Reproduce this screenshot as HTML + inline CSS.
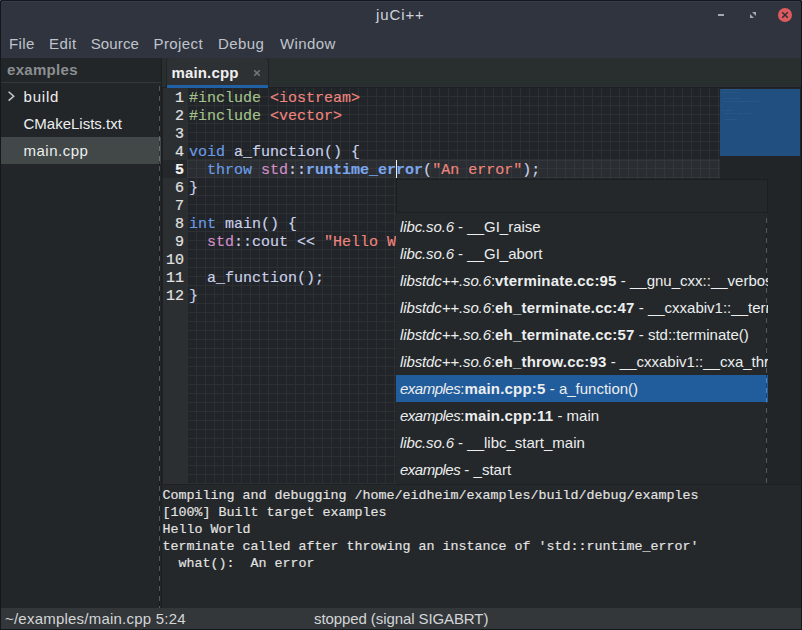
<!DOCTYPE html>
<html><head><meta charset="utf-8">
<style>
*{margin:0;padding:0;box-sizing:border-box}
html,body{width:802px;height:630px;overflow:hidden;background:#14171b}
body{position:relative;font-family:"Liberation Sans",sans-serif}
.a{position:absolute}
.ui{font-family:"Liberation Sans",sans-serif;white-space:pre}
.mono{font-family:"Liberation Mono",monospace;white-space:pre}
#menu span{position:absolute;top:35px;font-size:15px;color:#c0c4cb;line-height:17px;white-space:pre;letter-spacing:0.4px}
.ln{position:absolute;left:164px;width:20px;text-align:right;font-size:15px;line-height:18px;color:#e2e2e2;-webkit-text-stroke:0.2px currentColor}
.cl{position:absolute;left:189px;font-size:15px;line-height:18px;color:#cbd1ea;-webkit-text-stroke:0.15px currentColor}
.kw{color:#6b9de6}.pp{color:#a3c28b}.st{color:#f0857e}.ns{color:#d38fc9}.fn{color:#7aa6ee;font-weight:bold}
.term{position:absolute;left:162.5px;font-size:13.33px;line-height:17px;color:#e4e4e4;-webkit-text-stroke:0.15px currentColor}
.pr{position:absolute;left:0;width:372px;height:27px;font-size:15px;line-height:27px;color:#eceeef;padding-left:4px;white-space:pre;overflow:hidden}
.pr{letter-spacing:0px}.pr i{font-style:italic;letter-spacing:-0.12px}.pr i.e{letter-spacing:-0.5px}.pr b{font-weight:bold;letter-spacing:0.2px}
.dash2{background-image:linear-gradient(to bottom,rgba(255,255,255,0.22) 5px,rgba(0,0,0,0.25) 5px);background-size:1px 10px}
.dash{background-image:linear-gradient(to bottom,rgba(255,255,255,0.23) 5px,rgba(0,0,0,0.28) 5px);background-size:1px 10px}
</style></head><body>
<div class="a" style="left:1px;top:1px;width:800px;height:628px;background:#2f343f;border-radius:2px 2px 0 0"></div>
<div class="a" style="left:0;top:0;width:1px;height:1px;background:#4a5564"></div><div class="a" style="left:801px;top:0;width:1px;height:1px;background:#4a5564"></div>
<div class="a" style="left:2px;top:1px;width:798px;height:1px;background:#373c4a"></div>
<div class="a ui" style="left:376px;top:6px;font-size:15px;color:#cfd3da;line-height:18px;letter-spacing:0.9px">juCi++</div>
<div class="a" style="left:718px;top:14px;width:6px;height:2px;background:#a4a8b1"></div>
<svg class="a" style="left:744px;top:6px" width="20" height="20"><polygon points="8,6 12,6 12,10" fill="#a4a8b1"/><polygon points="6,8 6,12 10,12" fill="#a4a8b1"/></svg>
<svg class="a" style="left:774px;top:4px" width="22" height="22"><circle cx="11" cy="11" r="7" fill="#dd5a5f"/><path d="M8.2 8.2 L13.8 13.8 M13.8 8.2 L8.2 13.8" stroke="#2c303a" stroke-width="1.5" fill="none"/></svg>
<div id="menu"><span style="left:9px">File</span><span style="left:49px">Edit</span><span style="left:90.7px;letter-spacing:0.15px">Source</span><span style="left:153.5px">Project</span><span style="left:218px">Debug</span><span style="left:280px">Window</span></div>
<div class="a" style="left:1px;top:58px;width:160px;height:550px;background:#232629"></div>
<div class="a ui" style="left:7px;top:61px;font-size:15px;line-height:18px;font-weight:bold;color:#8c8f91;letter-spacing:0.3px">examples</div>
<div class="a" style="left:1px;top:82px;width:160px;height:1px;background:#34383b"></div>
<div class="a" style="left:1px;top:137px;width:160px;height:27px;background:#424847"></div>
<svg class="a" style="left:6px;top:90px" width="12" height="14"><path d="M2.6 1.8 L7.7 6.2 L2.6 10.6" fill="none" stroke="#c8cacb" stroke-width="1.5"/></svg>
<div class="a ui" style="left:23.5px;top:88px;font-size:15px;line-height:18px;color:#eceeef;letter-spacing:0.8px">build</div>
<div class="a ui" style="left:23.5px;top:115px;font-size:15px;line-height:18px;color:#eceeef">CMakeLists.txt</div>
<div class="a ui" style="left:23.5px;top:142px;font-size:15px;line-height:18px;color:#eceeef;letter-spacing:0.5px">main.cpp</div>
<div class="a dash" style="left:159px;top:86px;width:1px;height:522px"></div>
<div class="a" style="left:161px;top:58px;width:1px;height:550px;background:#1c1e20"></div>
<div class="a" style="left:162px;top:58px;width:639px;height:30px;background:#292e2e"></div>
<div class="a" style="left:162px;top:86px;width:639px;height:1px;background:#2d2e3b"></div>
<div class="a" style="left:162px;top:87px;width:639px;height:1px;background:#1e2022"></div>
<div class="a" style="left:166px;top:58px;width:103px;height:30px;background:#2d3134;border-radius:4px 4px 0 0;border-right:1px solid #1f2224;border-left:1px solid #222528"></div>
<div class="a ui" style="left:171.5px;top:64px;font-size:15px;line-height:18px;font-weight:bold;color:#f0f0f0;letter-spacing:0.15px">main.cpp</div>
<svg class="a" style="left:246px;top:62px" width="22" height="22"><path d="M8.2 8.2 L13.8 13.8 M13.8 8.2 L8.2 13.8" stroke="#727678" stroke-width="1.6" fill="none"/></svg>
<div class="a" style="left:167px;top:85px;width:101px;height:3px;background:#2160a5"></div>
<div class="a" style="left:166px;top:84px;width:1px;height:4px;background:#1e2022"></div>
<div class="a" style="left:162px;top:88px;width:1px;height:397px;background:#1e2022"></div>
<div class="a" style="left:163px;top:88px;width:25px;height:396px;background:#2b2f31"></div>
<div class="a" style="left:188px;top:88px;width:532px;height:396px;background-color:#212428;background-image:linear-gradient(to right,transparent 8px,#2c3033 8px),linear-gradient(to bottom,transparent 8px,#2c3033 8px);background-size:9px 9px,9px 9px"></div>
<div class="a" style="left:163px;top:160px;width:24px;height:18px;background:#25282b"></div>
<div class="a" style="left:187px;top:160px;width:533px;height:18px;background:rgba(255,255,255,0.045);border-top:1px solid #33373a;border-left:1px solid #35393c"></div>
<div class="ln mono" style="top:90px">1</div>
<div class="cl mono" style="top:90px"><span class="pp">#include</span> <span class="st">&lt;iostream&gt;</span></div>
<div class="ln mono" style="top:108px">2</div>
<div class="cl mono" style="top:108px"><span class="pp">#include</span> <span class="st">&lt;vector&gt;</span></div>
<div class="ln mono" style="top:126px">3</div>
<div class="cl mono" style="top:126px"></div>
<div class="ln mono" style="top:144px">4</div>
<div class="cl mono" style="top:144px"><span class="kw">void</span> a_function() {</div>
<div class="ln mono" style="top:162px;font-weight:bold;color:#f4f4f4">5</div>
<div class="cl mono" style="top:162px">  <span class="kw">throw</span> <span class="ns">std</span>::<span class="fn">runtime_error</span>(<span class="st">"An error"</span>);</div>
<div class="ln mono" style="top:180px">6</div>
<div class="cl mono" style="top:180px">}</div>
<div class="ln mono" style="top:198px">7</div>
<div class="cl mono" style="top:198px"></div>
<div class="ln mono" style="top:216px">8</div>
<div class="cl mono" style="top:216px"><span class="kw">int</span> main() {</div>
<div class="ln mono" style="top:234px">9</div>
<div class="cl mono" style="top:234px">  <span class="ns">std</span>::cout &lt;&lt; <span class="st">"Hello World"</span>;</div>
<div class="ln mono" style="top:252px">10</div>
<div class="cl mono" style="top:252px"></div>
<div class="ln mono" style="top:270px">11</div>
<div class="cl mono" style="top:270px">  a_function();</div>
<div class="ln mono" style="top:288px">12</div>
<div class="cl mono" style="top:288px">}</div>
<div class="a" style="left:396px;top:160px;width:1px;height:18px;background:#f0f0f0"></div>
<div class="a" style="left:720px;top:88px;width:81px;height:397px;background:#222528"></div>
<div class="a" style="left:720px;top:89px;width:80px;height:67px;background:#214f80"></div>
<div class="a" style="left:722px;top:89px;width:8px;height:1px;background:#2a5685"></div>
<div class="a" style="left:731px;top:89px;width:10px;height:1px;background:#2a5685"></div>
<div class="a" style="left:722px;top:92px;width:8px;height:1px;background:#2a5685"></div>
<div class="a" style="left:731px;top:92px;width:8px;height:1px;background:#2a5685"></div>
<div class="a" style="left:722px;top:98px;width:4px;height:1px;background:#2a5685"></div>
<div class="a" style="left:727px;top:98px;width:12px;height:1px;background:#2a5685"></div>
<div class="a" style="left:740px;top:98px;width:1px;height:1px;background:#2a5685"></div>
<div class="a" style="left:724px;top:101px;width:5px;height:1px;background:#2a5685"></div>
<div class="a" style="left:730px;top:101px;width:22px;height:1px;background:#2a5685"></div>
<div class="a" style="left:753px;top:101px;width:8px;height:1px;background:#2a5685"></div>
<div class="a" style="left:722px;top:104px;width:1px;height:1px;background:#2a5685"></div>
<div class="a" style="left:722px;top:110px;width:3px;height:1px;background:#2a5685"></div>
<div class="a" style="left:726px;top:110px;width:6px;height:1px;background:#2a5685"></div>
<div class="a" style="left:733px;top:110px;width:1px;height:1px;background:#2a5685"></div>
<div class="a" style="left:724px;top:113px;width:9px;height:1px;background:#2a5685"></div>
<div class="a" style="left:734px;top:113px;width:2px;height:1px;background:#2a5685"></div>
<div class="a" style="left:737px;top:113px;width:6px;height:1px;background:#2a5685"></div>
<div class="a" style="left:744px;top:113px;width:7px;height:1px;background:#2a5685"></div>
<div class="a" style="left:724px;top:119px;width:13px;height:1px;background:#2a5685"></div>
<div class="a" style="left:722px;top:122px;width:1px;height:1px;background:#2a5685"></div>
<div class="a" style="left:162px;top:484px;width:639px;height:1px;background:#1e2022"></div>
<div class="a" style="left:162px;top:485px;width:639px;height:123px;background:#24282a"></div>
<div class="a" style="left:161px;top:485px;width:1px;height:123px;background:#1c1e20"></div>
<div class="term mono" style="top:487px">Compiling and debugging /home/eidheim/examples/build/debug/examples</div>
<div class="term mono" style="top:504px">[100%] Built target examples</div>
<div class="term mono" style="top:521px">Hello World</div>
<div class="term mono" style="top:538px">terminate called after throwing an instance of 'std::runtime_error'</div>
<div class="term mono" style="top:555px">  what():  An error</div>
<div class="a" style="left:396px;top:179px;width:372px;height:305px;background:#24282a;overflow:hidden">
<div class="a" style="left:0;top:0;width:372px;height:34px;background:#24282a;border:1px solid #1c1f21"></div>
<div class="pr ui" style="top:34px"><i>libc.so.6</i> - __GI_raise</div>
<div class="pr ui" style="top:61px"><i>libc.so.6</i> - __GI_abort</div>
<div class="pr ui" style="top:88px"><i>libstdc++.so.6</i>:<b>vterminate.cc:95</b> - __gnu_cxx::__verbose_terminate_handler()</div>
<div class="pr ui" style="top:115px"><i>libstdc++.so.6</i>:<b>eh_terminate.cc:47</b> - __cxxabiv1::__terminate(void (*)())</div>
<div class="pr ui" style="top:142px"><i>libstdc++.so.6</i>:<b>eh_terminate.cc:57</b> - std::terminate()</div>
<div class="pr ui" style="top:169px"><i>libstdc++.so.6</i>:<b>eh_throw.cc:93</b> - __cxxabiv1::__cxa_throw</div>
<div class="pr ui" style="top:196px;background:#215d9c"><i class="e">examples</i>:<b>main.cpp:5</b> - a_function()</div>
<div class="pr ui" style="top:223px"><i class="e">examples</i>:<b>main.cpp:11</b> - main</div>
<div class="pr ui" style="top:250px"><i>libc.so.6</i> - __libc_start_main</div>
<div class="pr ui" style="top:277px"><i class="e">examples</i> - _start</div>
<div class="a dash2" style="left:370px;top:39px;width:1px;height:266px"></div>
</div>
<div class="a" style="left:1px;top:608px;width:800px;height:21px;background:#33373a"></div>
<div class="a ui" style="left:5px;top:610px;font-size:15px;line-height:18px;color:#d3d6d8;letter-spacing:0.22px">~/examples/main.cpp 5:24</div>
<div class="a ui" style="left:314px;top:610px;font-size:15px;line-height:18px;color:#d3d6d8;letter-spacing:-0.09px">stopped (signal SIGABRT)</div>
</body></html>
